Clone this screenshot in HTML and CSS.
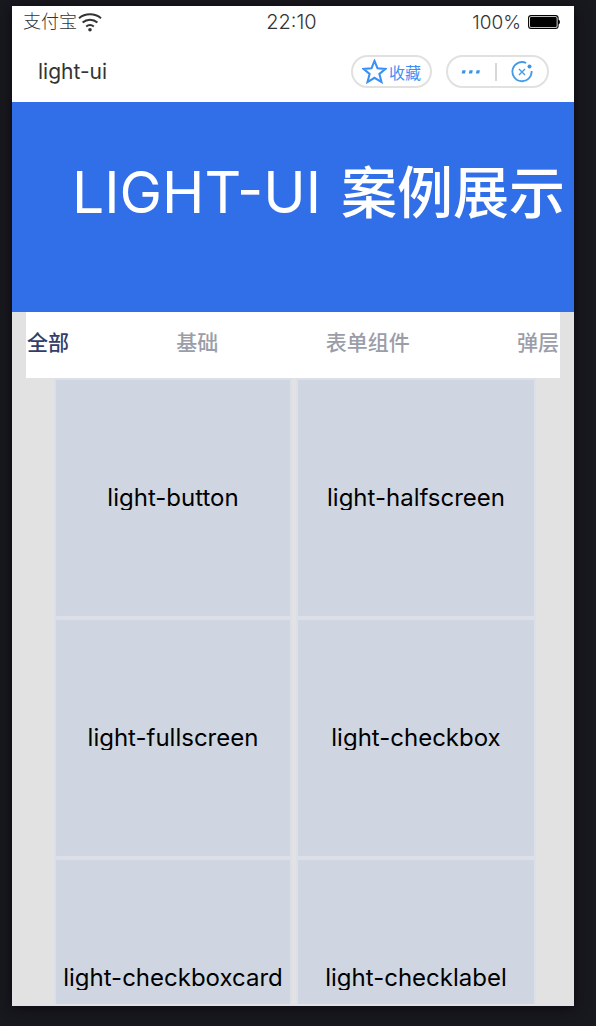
FILE: index.html
```html
<!DOCTYPE html>
<html lang="zh-CN">
<head>
<meta charset="utf-8">
<meta name="viewport" content="width=device-width, initial-scale=1">
<title>light-ui</title>
<link rel="stylesheet" href="styles.css">
</head>
<body>
<div class="phone">
  <div class="status">
    <div class="carrier">
      <span>支付宝</span>
      <svg class="wifi" viewBox="0 0 24 19" fill="none" stroke="#333" stroke-width="2" aria-hidden="true">
        <path d="M1 5.2C7.2-.1 16.8-.1 23 5.2M4.6 9.6c4.3-3.9 10.5-3.9 14.8 0M8.2 13.6c2.3-1.9 5.300-1.9 7.600 0"/>
        <circle cx="12" cy="16.700" r="1.800" fill="#333" stroke="none"/>
      </svg>
    </div>
    <span class="clock">22:10</span>
    <div class="power">
      <span>100%</span>
      <svg class="battery" viewBox="0 0 32 14" aria-hidden="true">
        <rect x=".6" y=".6" width="29.500" height="12.800" rx="2.500" fill="#fff" stroke="#000" stroke-width="1.100"/>
        <rect x="2" y="2" width="26.700" height="10" rx="1" fill="#000"/>
        <path d="M30 4.500q2 .3 2 2.500t-2 2.500z" fill="#000"/>
      </svg>
    </div>
  </div>
  <header class="navbar">
    <span class="app-name">light-ui</span>
    <button class="pill favorite" type="button">
      <svg class="star" viewBox="0 0 24 24" fill="none" stroke="#3b90f5" stroke-width="2" aria-hidden="true">
        <path d="M12 1.800l2.900 7.200 7.700.5-5.900 4.900 2 7.700L12 18l-6.700 4.100 2-7.700L1.400 9.500l7.700-.5z"/>
      </svg>
      <span>收藏</span>
    </button>
    <div class="pill capsule">
      <button class="icon-button" type="button" aria-label="更多">
        <svg class="more" viewBox="0 0 20 4" fill="#3d93e8" aria-hidden="true">
          <path d="M1.500.3h3.200L4 3.600H.6zM8.600.3h3.200l-.7 3.300H7.700zM15.700.3h3.200l-.7 3.300h-3.400z"/>
        </svg>
      </button>
      <span class="divider"></span>
      <button class="icon-button" type="button" aria-label="关闭">
        <svg class="close" viewBox="0 0 22 22" fill="none" stroke="#439be8" aria-hidden="true">
          <path d="M15.200 2A9.600 9.600 0 1 0 20.600 10" stroke-width="1.800"/>
          <path d="M8 8l6 6m0-6l-6 6" stroke-width="1.400"/>
          <circle cx="18.500" cy="5.400" r="2" fill="#3d93e8" stroke="none"/>
        </svg>
      </button>
    </div>
  </header>
  <main class="page">
    <h1 class="banner">LIGHT-UI <span class="banner-cjk">案例展示</span></h1>
    <nav class="tabs">
      <a class="tab active" href="#all">全部</a>
      <a class="tab" href="#basic">基础</a>
      <a class="tab" href="#form">表单组件</a>
      <a class="tab" href="#popup">弹层</a>
    </nav>
    <div class="grid">
      <a class="card" href="#light-button"><span class="card-name">light-button</span></a>
      <a class="card" href="#light-halfscreen"><span class="card-name">light-halfscreen</span></a>
      <a class="card" href="#light-fullscreen"><span class="card-name">light-fullscreen</span></a>
      <a class="card" href="#light-checkbox"><span class="card-name">light-checkbox</span></a>
      <a class="card" href="#light-checkboxcard"><span class="card-name">light-checkboxcard</span></a>
      <a class="card" href="#light-checklabel"><span class="card-name">light-checklabel</span></a>
    </div>
  </main>
</div>
</body>
</html>
```
FILE: styles.css
```css
* {
  box-sizing: border-box;
}

body {
  margin: 0;
  height: 100vh;
  padding: 6px 22px 20px 12px;
  overflow: hidden;
  background: #18191e;
  font-family: Inter, "Noto Sans CJK SC", sans-serif;
}

.phone {
  display: flex;
  flex-direction: column;
  height: 100%;
  background: #e2e2e2;
  box-shadow: 0 2px 12px #0c0811;
  border-bottom: 2px solid #e0e2e5;
}

.status {
  display: grid;
  grid-template-columns: 1fr auto 1fr;
  align-items: center;
  height: 32px;
  padding: 0 14px 0 11px;
  background: #fff;
  color: #333;
  font-size: 18px;
  font-weight: 300;
}

.clock {
  font-size: 20px;
}

.carrier,
.power {
  display: flex;
  align-items: center;
}

.carrier {
  gap: 1px;
  line-height: 30px;
}

.power {
  justify-content: flex-end;
  gap: 7px;
  font-size: 19px;
}

.wifi {
  width: 24px;
  height: 19px;
}

.battery {
  width: 32px;
  height: 14px;
}

.navbar {
  display: flex;
  align-items: center;
  height: 64px;
  padding: 3px 25px 0 26px;
  background: #fff;
}

.app-name {
  flex: 1;
  color: #333;
  font-size: 21px;
}

.pill {
  display: flex;
  align-items: center;
  justify-content: center;
  height: 33px;
  border: 2px solid #e1e1e1;
  border-radius: 17px;
  background: #fff;
  font-family: inherit;
}

.favorite {
  gap: 2px;
  padding: 0 9px;
  color: #3b90f5;
  font-size: 16px;
}

.star {
  width: 25px;
  height: 25px;
}

.capsule {
  gap: 14px;
  margin-left: 14px;
  padding: 0 14px 0 13px;
}

.icon-button {
  display: flex;
  padding: 0;
  border: 0;
  background: none;
}

.more {
  width: 20px;
  height: 4px;
}

.divider {
  width: 2px;
  height: 18px;
  background: #d8d8d8;
}

.close {
  width: 22px;
  height: 22px;
}

.page {
  flex: 1;
  min-height: 0;
  overflow: hidden;
}

.banner {
  height: 210px;
  margin: 0;
  padding: 57px 0 0 60px;
  background: #316fe9;
  color: #fff;
  font-size: 57px;
  font-weight: 400;
  line-height: 68px;
  white-space: nowrap;
}

.banner-cjk {
  margin-left: 4px;
  font-size: 56px;
  font-weight: 500;
}

.tabs {
  display: flex;
  justify-content: space-between;
  height: 66px;
  margin: 0 14px;
  padding: 0 1px;
  background: #fff;
  line-height: 62px;
}

.tab {
  color: #9b9da8;
  font-size: 21px;
  font-weight: 500;
  text-decoration: none;
}

.active {
  color: #333d69;
}

.grid {
  display: grid;
  grid-template-columns: 119fr 120fr;
  grid-auto-rows: 240px;
  column-gap: 4px;
  padding: 0 38px 0 42px;
}

.card {
  display: flex;
  align-items: center;
  justify-content: center;
  border: 2px solid #dcdfe7;
  background: #cfd6e2;
  color: #000;
  text-decoration: none;
}

.card-name {
  overflow: hidden;
  font-size: 24px;
  line-height: 24px;
}
```
